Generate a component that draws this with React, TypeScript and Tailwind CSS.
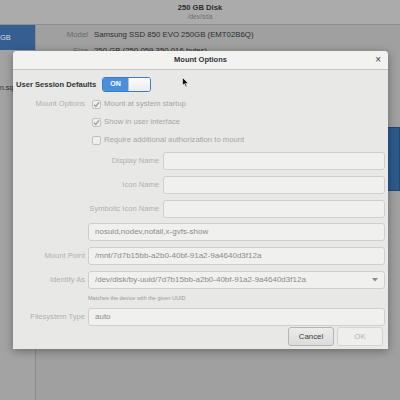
import React from "react"

const font = { fontFamily: '"Liberation Sans", Arial, sans-serif' }

function Check({ checked, label }: { checked: boolean; label: string }) {
  return (
    <div className="flex items-center gap-[3px] h-[18px]">
      <div className="w-[9px] h-[9px] rounded-[2px] border border-[#c2c2c0] bg-[#efefee] flex items-center justify-center">
        {checked && (
          <svg width="7" height="7" viewBox="0 0 8 8">
            <path d="M1.2 4.2 L3.2 6.2 L6.9 1.6" fill="none" stroke="#9c9c9b" strokeWidth="1.5" />
          </svg>
        )}
      </div>
      <span className="text-[7.7px] text-[#a6a6a4] whitespace-nowrap">{label}</span>
    </div>
  )
}

function Entry({ value, className = "" }: { value?: string; className?: string }) {
  return (
    <div
      className={
        "h-[18px] rounded-[3px] border border-[#cfcfcd] bg-[#f0f0ef] flex items-center px-[6px] text-[8px] text-[#8b8b8a] whitespace-nowrap " +
        className
      }
    >
      {value}
    </div>
  )
}

function Label({ children, className = "" }: { children: React.ReactNode; className?: string }) {
  return <div className={"text-[7.6px] text-[#b1b1af] text-right whitespace-nowrap " + className}>{children}</div>
}

export default function App() {
  return (
    <div className="relative w-[400px] h-[400px] overflow-hidden bg-[#a0a0a0]" style={font}>
      {/* dimmed main window */}
      <div className="h-[25px] bg-[#ababab] border-b border-[#8f8f8f] flex flex-col items-center justify-center leading-none">
        <div className="text-[7.6px] font-bold text-[#2b2b2b]">250 GB Disk</div>
        <div className="text-[6.5px] text-[#6f6f6f] mt-[2px]">/dev/sda</div>
      </div>
      <div className="flex h-[375px]">
        <div className="w-[36px] border-r border-[#8c8c8c] bg-[#a3a3a3] flex flex-col">
          <div className="h-[25px] bg-[#345f90] flex items-center text-[7.5px] text-[#d8dde4]">GB</div>
          <div className="mt-[34px] text-[7px] text-[#2e2e2e] leading-none">n.sq</div>
        </div>
        <div className="flex-1 relative">
          <div className="flex items-center gap-[6px] h-[20px] text-[7.8px]">
            <div className="w-[52px] text-right text-[#6a6a6a]">Model</div>
            <div className="text-[#2e2e2e]">Samsung SSD 850 EVO 250GB (EMT02B6Q)</div>
          </div>
          <div className="flex items-start gap-[6px] text-[7.8px] leading-[9px] pt-[1px]">
            <div className="w-[52px] text-right text-[#6a6a6a]">Size</div>
            <div className="text-[#2e2e2e]">250 GB (250,059,350,016 bytes)</div>
          </div>
          <div className="ml-[40px] mt-[72px] h-[64px] bg-[#2c5a8c] border border-[#22486f]" />
        </div>
      </div>

      {/* dialog */}
      <div className="absolute left-[13px] top-[51px] w-[375px] h-[298px] rounded-t-[4px] bg-[#e8e8e7] shadow-[0_2px_10px_rgba(0,0,0,0.35)] flex flex-col">
        <div className="h-[19px] rounded-t-[4px] bg-[#f2f2f1] border-b border-[#c4c4c2] relative flex items-center justify-center">
          <span className="text-[7.5px] font-bold text-[#2e3436]">Mount Options</span>
          <span className="absolute right-[7px] top-[2px] text-[10px] text-[#3a3a3a] leading-[14px]">×</span>
        </div>
        <div className="flex flex-col pl-[3px] pr-[3px]">
          <div className="flex items-center h-[15px] mt-[7px]">
            <div className="w-[86px] text-[7.6px] font-bold text-[#2e3436] whitespace-nowrap">User Session Defaults</div>
            <div className="flex h-[15px] w-[49px] rounded-[3px] overflow-hidden border border-[#3d7cc4]">
              <div className="w-[25px] bg-[#4a8fdc] flex items-center justify-center text-[7px] font-bold text-white">ON</div>
              <div className="flex-1 bg-gradient-to-b from-[#fbfbfb] to-[#ececec] border-l border-[#c0c0c0]" />
            </div>
          </div>
          <div className="grid grid-cols-[69px_1fr] gap-x-[3px] mt-[3px]">
            <Label className="leading-[18px]">Mount Options</Label>
            <div className="flex flex-col pl-[4px]">
              <Check checked label="Mount at system startup" />
              <Check checked label="Show in user interface" />
              <Check checked={false} label="Require additional authorization to mount" />
            </div>
            <div />
            <div className="grid grid-cols-[71px_1fr] gap-x-[4px] gap-y-[6px] mt-[3px] items-center">
              <Label>Display Name</Label>
              <Entry />
              <Label>Icon Name</Label>
              <Entry />
              <Label>Symbolic Icon Name</Label>
              <Entry />
            </div>
            <div />
            <Entry value="nosuid,nodev,nofail,x-gvfs-show" className="mt-[5px]" />
            <Label className="self-center mt-[6px]">Mount Point</Label>
            <Entry value="/mnt/7d7b15bb-a2b0-40bf-91a2-9a4640d3f12a" className="mt-[6px]" />
            <Label className="self-center mt-[6px]">Identify As</Label>
            <div className="mt-[6px] h-[18px] rounded-[3px] border border-[#cfcfcd] bg-[#f0f0ef] flex items-center justify-between px-[6px] text-[8px] text-[#8b8b8a]">
              <span>/dev/disk/by-uuid/7d7b15bb-a2b0-40bf-91a2-9a4640d3f12a</span>
              <svg width="6" height="4" viewBox="0 0 6 4">
                <path d="M0 0 H6 L3 3.5 Z" fill="#8a8a89" />
              </svg>
            </div>
            <div />
            <div className="h-[19px] flex items-center text-[5.5px] text-[#9a9a98] whitespace-nowrap">Matches the device with the given UUID</div>
            <Label className="self-center">Filesystem Type</Label>
            <Entry value="auto" />
          </div>
          <div className="flex justify-end gap-[3px] pr-[2px] mt-[1px]">
            <div className="w-[46px] h-[19px] rounded-[3px] border border-[#b5b5b3] bg-gradient-to-b from-[#ececeb] to-[#dcdcdb] flex items-center justify-center text-[7.8px] text-[#3a3a3a]">
              Cancel
            </div>
            <div className="w-[46px] h-[19px] rounded-[3px] border border-[#d4d4d2] bg-[#eeeeed] flex items-center justify-center text-[7.8px] text-[#b3b3b1]">
              OK
            </div>
          </div>
        </div>
      </div>

      {/* mouse pointer */}
      <svg className="absolute left-[182px] top-[77px]" width="7" height="11" viewBox="0 0 7 11">
        <path d="M0.5 0.5 L0.5 8.5 L2.4 6.8 L3.8 10 L5 9.4 L3.7 6.4 L6.2 6.2 Z" fill="#111" stroke="#fff" strokeWidth="0.6" />
      </svg>
    </div>
  )
}
